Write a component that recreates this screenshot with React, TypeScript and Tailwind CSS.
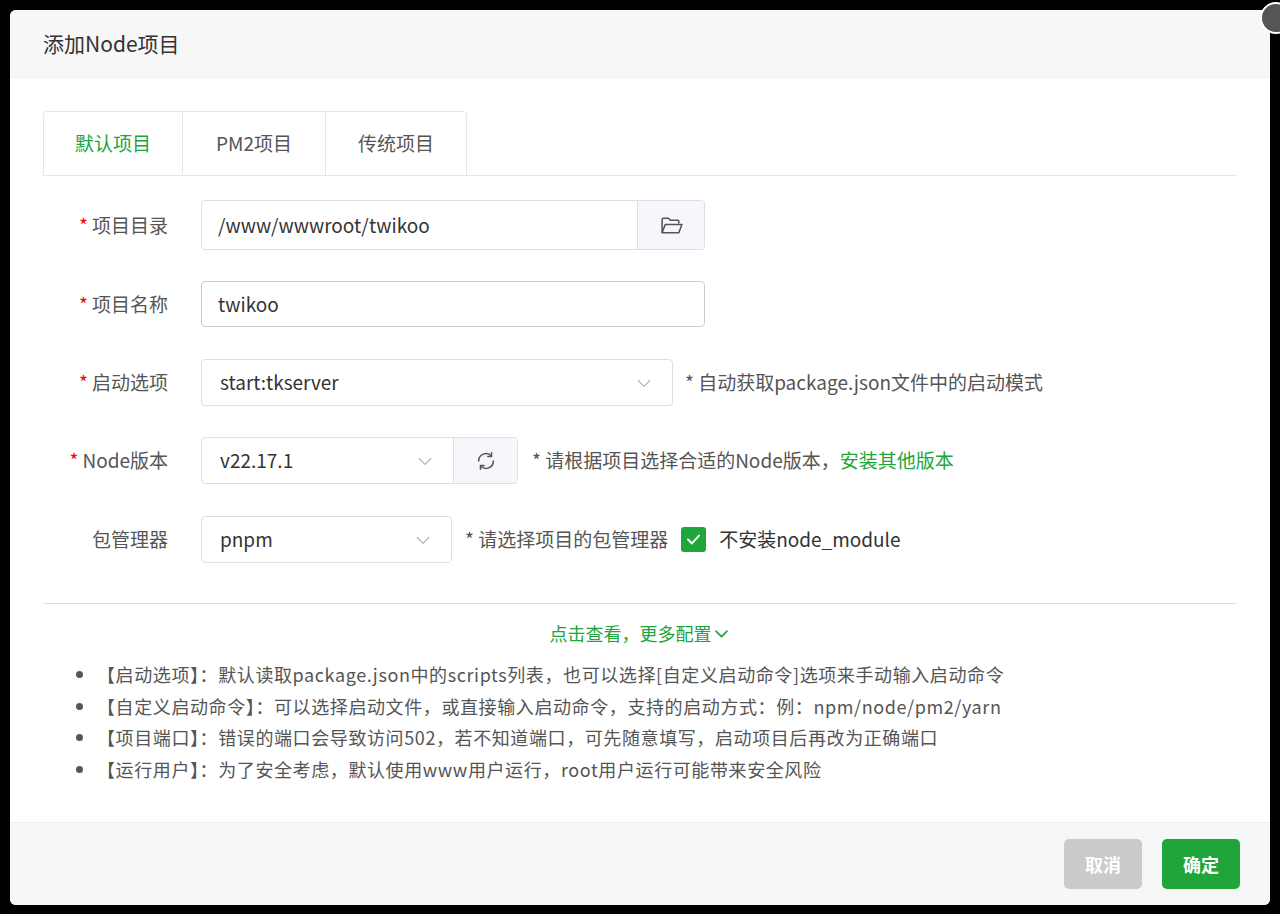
import React from 'react';

const font = { fontFamily: '"Noto Sans CJK SC", "Noto Sans", sans-serif' };

const Chevron = () => (
  <svg width="20" height="20" viewBox="0 0 24 24" fill="none" stroke="#b0b4bb" strokeWidth="1.5" strokeLinecap="round" strokeLinejoin="round">
    <path d="M5 9l7 7 7-7" />
  </svg>
);

const Label = ({ text, required = true }: { text: string; required?: boolean }) => (
  <div className="w-[158px] shrink-0 text-right pr-[33px] text-[19px] text-[#555] whitespace-nowrap">
    {required && <span className="text-[#ef0808] mr-1">*</span>}
    {text}
  </div>
);

const Select = ({ value, w }: { value: string; w: string }) => (
  <div className={`${w} h-full flex items-center justify-between px-[18px] border border-[#dcdfe6] rounded-[4px] text-[19px] text-[#333]`}>
    <span>{value}</span>
    <Chevron />
  </div>
);

export default function App() {
  return (
    <div className="w-[1280px] h-[914px] bg-black pt-[10px] px-[10px] relative" style={font}>
      <div className="w-[1260px] h-[895px] bg-white rounded-[6px] overflow-hidden flex flex-col">
        <div className="h-[68px] shrink-0 bg-[#f7f7f7] border-b border-[#eee] flex items-center px-[33px] text-[21px] text-[#333]">
          添加Node项目
        </div>

        <div className="flex-1 px-[33px] pt-[33px]">
          {/* tabs */}
          <div className="flex border-b border-[#e4e7ed] text-[19px]">
            <div className="w-[140px] h-[64px] flex items-center justify-center text-[#20a53a] border border-[#e4e7ed] border-b-white -mb-px rounded-tl-[4px] bg-white">默认项目</div>
            <div className="w-[143px] h-[64px] flex items-center justify-center text-[#555] border-t border-r border-[#e4e7ed]">PM2项目</div>
            <div className="w-[141px] h-[64px] flex items-center justify-center text-[#555] border-t border-r border-[#e4e7ed] rounded-tr-[4px]">传统项目</div>
          </div>

          <div className="flex flex-col gap-[32px] mt-[24px]">
            <div className="flex items-center h-[50px]">
              <Label text="项目目录" />
              <div className="w-[504px] h-full flex border border-[#dcdfe6] rounded-[4px] overflow-hidden">
                <div className="flex-1 flex items-center px-[16px] text-[19px] text-[#333]">/www/wwwroot/twikoo</div>
                <div className="w-[67px] bg-[#f5f7fa] border-l border-[#dcdfe6] flex items-center justify-center">
                  <svg width="25" height="25" viewBox="0 0 24 24" fill="none" stroke="#555" strokeWidth="1.5" strokeLinejoin="round">
                    <path d="M3 19V6a1 1 0 0 1 1-1h5l2 2h7a1 1 0 0 1 1 1v2" />
                    <path d="M3 19l3-8h16l-3 8z" />
                  </svg>
                </div>
              </div>
            </div>

            <div className="flex items-center h-[46px] -mt-[1px]">
              <Label text="项目名称" />
              <div className="w-[504px] h-full flex items-center px-[16px] border border-[#c8ccd2] rounded-[4px] text-[19px] text-[#333]">twikoo</div>
            </div>

            <div className="flex items-center h-[47px]">
              <Label text="启动选项" />
              <Select value="start:tkserver" w="w-[472px]" />
              <span className="ml-[12px] text-[19px] text-[#555]">* 自动获取package.json文件中的启动模式</span>
            </div>

            <div className="flex items-center h-[47px] -mt-[1px]">
              <Label text="Node版本" />
              <div className="flex h-full border border-[#dcdfe6] rounded-[4px] overflow-hidden">
                <div className="w-[251px] flex items-center justify-between px-[18px] text-[19px] text-[#333]">
                  <span>v22.17.1</span>
                  <Chevron />
                </div>
                <div className="w-[64px] bg-[#f5f7fa] border-l border-[#dcdfe6] flex items-center justify-center">
                  <svg width="22" height="22" viewBox="0 0 24 24" fill="none" stroke="#555" strokeWidth="1.7" strokeLinecap="round" strokeLinejoin="round">
                    <path d="M20 12a8 8 0 0 1-14 5.3M4 12a8 8 0 0 1 14-5.3" />
                    <path d="M18 3v4h-4M6 21v-4h4" />
                  </svg>
                </div>
              </div>
              <span className="ml-[14px] text-[19px] text-[#555]">
                * 请根据项目选择合适的Node版本，<span className="text-[#20a53a]">安装其他版本</span>
              </span>
            </div>

            <div className="flex items-center h-[47px]">
              <Label text="包管理器" required={false} />
              <Select value="pnpm" w="w-[251px]" />
              <span className="ml-[13px] text-[19px] text-[#555]">* 请选择项目的包管理器</span>
              <div className="ml-[13px] w-[25px] h-[25px] bg-[#20a53a] rounded-[3px] flex items-center justify-center">
                <svg width="19" height="19" viewBox="0 0 24 24" fill="none" stroke="#fff" strokeWidth="2.4" strokeLinecap="round" strokeLinejoin="round">
                  <path d="M5 12l5 5 9-10" />
                </svg>
              </div>
              <span className="ml-[13px] text-[19px] text-[#333]">不安装node_module</span>
            </div>
          </div>

          <div className="mt-[40px] border-t border-[#dcdfe6]" />
          <div className="mt-[16px] flex items-center justify-center text-[18px] text-[#20a53a]">
            点击查看，更多配置
            <svg width="19" height="19" viewBox="0 0 24 24" fill="none" stroke="#20a53a" strokeWidth="2" strokeLinecap="round" strokeLinejoin="round">
              <path d="M5 9l7 7 7-7" />
            </svg>
          </div>

          <ul className="mt-[12px] ml-[35px] list-disc pl-[19px] text-[18px] tracking-[0.6px] leading-[31.7px] text-[#555] marker:text-[#555]">
            <li>【启动选项】：默认读取package.json中的scripts列表，也可以选择[自定义启动命令]选项来手动输入启动命令</li>
            <li>【自定义启动命令】：可以选择启动文件，或直接输入启动命令，支持的启动方式：例：npm/node/pm2/yarn</li>
            <li>【项目端口】：错误的端口会导致访问502，若不知道端口，可先随意填写，启动项目后再改为正确端口</li>
            <li>【运行用户】：为了安全考虑，默认使用www用户运行，root用户运行可能带来安全风险</li>
          </ul>
        </div>

        <div className="h-[83px] shrink-0 bg-[#f6f8f8] border-t border-[#eee] flex items-center justify-end gap-[20px] px-[30px]">
          <button className="w-[78px] h-[50px] rounded-[5px] bg-[#cbcbcb] text-white text-[18px] font-bold">取消</button>
          <button className="w-[78px] h-[50px] rounded-[5px] bg-[#20a53a] text-white text-[18px] font-bold">确定</button>
        </div>
      </div>
      <div className="absolute right-[-12px] top-[2px] w-[32px] h-[32px] rounded-full bg-[#555] border-2 border-white" />
    </div>
  );
}
